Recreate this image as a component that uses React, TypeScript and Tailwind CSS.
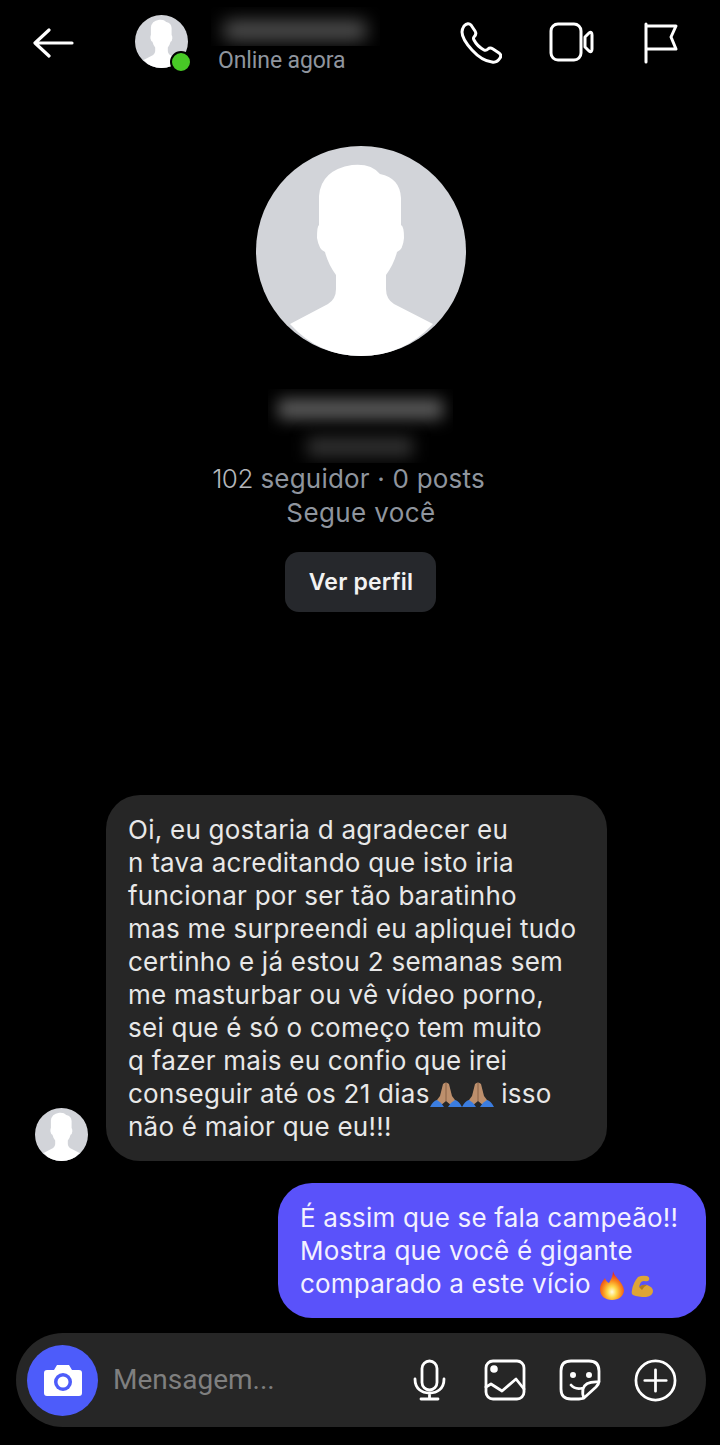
function Person({ className }: { className: string }) {
  // default avatar silhouette
  return (
    <svg viewBox="0 0 210 210" className={className}>
      <circle cx="105" cy="105" r="105" fill="#d2d4d9" />
      <path
        d="M34 178 L72 158 Q80 153 80 143 L80 129 Q72 118 69 106 Q63 104 61 92 Q61 80 63 79 L63 50 Q65 24 96 19 Q115 17 124 28 Q144 32 145 52 L145 79 Q148 80 148 92 Q147 104 141 106 Q138 118 130 129 L130 143 Q130 153 138 158 L177 178 Q147 210 105 210 Q63 210 34 178 Z"
        fill="#fff"
      />
    </svg>
  );
}

function Fire() {
  return (
    <svg viewBox="0 0 24 29" className="inline-block w-[24px] h-[29px] ml-[2px] align-[-7px]">
      <defs>
        <radialGradient id="flame" cx="50%" cy="72%" r="62%">
          <stop offset="0%" stopColor="#fffbe0" />
          <stop offset="30%" stopColor="#ffd94a" />
          <stop offset="62%" stopColor="#f98a1c" />
          <stop offset="100%" stopColor="#e5301f" />
        </radialGradient>
      </defs>
      <path d="M13 0 C14 6 23 11 24 19 C24 25 19 29 12 29 C5 29 0 25 0 18 C0 13 3 10 5 7 C6 10 7 11 9 12 C11 8 13 5 13 0 Z" fill="url(#flame)" />
    </svg>
  );
}

function Muscle() {
  return (
    <svg viewBox="0 0 22 22" className="inline-block w-[22px] h-[22px] ml-[7px] align-[-4px]">
      <path d="M7 2 Q11 0 16 1 Q19 2 18 5 Q17 7 13 6 Q10 6 9 9 L8 12 Q12 9 16 10 Q22 12 22 16 Q22 21 15 22 Q7 22 2 20 Q0 19 1 15 Q2 8 7 2 Z" fill="#dfa535" />
      <path d="M8 12 Q12 9 16 10 Q12 12 11 15 Z" fill="#b37a1e" />
    </svg>
  );
}

function Pray() {
  return (
    <svg viewBox="0 0 32 26" className="inline-block w-[32px] h-[26px] align-[-5px]">
      <path d="M13 2 Q16 -1 19 2 L22 14 L28 22 L22 24 L16 19 L10 24 L4 22 L10 14 Z" fill="#bd8f6c" />
      <path d="M16 1 V19" stroke="#8a6246" strokeWidth="1" />
      <path d="M0 25 Q3 19 7 18 Q11 20 14 25 Z" fill="#3b7de0" />
      <path d="M32 25 Q29 19 25 18 Q21 20 18 25 Z" fill="#3b7de0" />
    </svg>
  );
}

export default function App() {
  return (
    <main className="w-[720px] h-[1445px] bg-black flex flex-col overflow-hidden font-['Inter',sans-serif]">
      {/* header */}
      <header className="h-[85px] flex pl-[33px] pr-[42px] shrink-0">
        <svg viewBox="0 0 41 30" fill="none" stroke="#fff" strokeWidth="3.2" strokeLinecap="round" strokeLinejoin="round" className="w-[41px] h-[30px] mt-[28px] shrink-0">
          <path d="M39 15 H3 M16 2 L2 15 L16 28" />
        </svg>
        <div className="relative w-[53px] h-[53px] ml-[61px] mt-[15px] shrink-0">
          <Person className="w-[53px] h-[53px]" />
          <span className="absolute left-[35px] top-[36px] w-[22px] h-[22px] rounded-full bg-[#48c926] border-2 border-black" />
        </div>
        <div className="ml-[23px] w-[180px] shrink-0">
          <div className="h-[39px] mt-[7px] w-[169px] overflow-hidden">
            <div className="w-[142px] h-[19px] ml-[13px] mt-[14px] bg-[#555555] blur-[9px]" />
          </div>
          <p className="ml-[7px] mt-[1px] text-[23px] leading-[28px] tracking-[-0.1px] text-[#8f959e] font-['Roboto',sans-serif]">Online agora</p>
        </div>
        <div className="ml-auto flex mt-[22px]">
          <svg viewBox="0 0 42 42" fill="none" stroke="#fff" strokeWidth="3" strokeLinecap="round" strokeLinejoin="round" className="w-[42px] h-[42px]">
            <path d="M4 4 Q8 0 11 3 L15 9 Q17 12 14 15 Q13 16 14 18 Q17 24 24 28 Q26 29 28 27 Q30 25 33 27 L39 31 Q42 33 40 36 Q37 41 32 40 Q22 39 12 28 Q2 17 2 10 Q2 7 4 4 Z" />
          </svg>
          <svg viewBox="0 0 45 40" fill="none" stroke="#fff" strokeWidth="3" strokeLinecap="round" strokeLinejoin="round" className="w-[45px] h-[40px] ml-[47px]">
            <rect x="2" y="2" width="30" height="36" rx="7" />
            <path d="M36 15 L40 11 Q43 9 43 13 V27 Q43 31 40 29 L36 25 Z" />
          </svg>
          <svg viewBox="0 0 34 42" fill="none" stroke="#fff" strokeWidth="3" strokeLinecap="round" strokeLinejoin="round" className="w-[34px] h-[42px] ml-[50px]">
            <path d="M2 40 V2 M2 4 H32 L27 15 L32 27 H2" />
          </svg>
        </div>
      </header>

      {/* profile */}
      <section className="flex flex-col items-center mt-[61px] shrink-0">
        <Person className="w-[210px] h-[210px] ml-[2px]" />
        <div className="w-[185px] h-[74px] mt-[33px] flex flex-col items-center overflow-hidden">
          <div className="w-[165px] h-[20px] mt-[10px] bg-[#5c5c5c] blur-[8px] shrink-0" />
          <div className="w-[106px] h-[20px] mt-[18px] bg-[#303030] blur-[8px] shrink-0" />
        </div>
        <p className="mt-[-1px] pr-[23px] text-[26px] leading-[34px] tracking-[0.2px] text-[#8f959e]">
          <span className="text-[#b4b6ba] font-light tracking-[-0.5px]">102</span> seguidor · 0 posts
        </p>
        <p className="pl-[2px] text-[26px] leading-[34px] tracking-[0.4px] text-[#8f959e]">Segue você</p>
        <button className="mt-[22px] pl-[2px] w-[151px] h-[60px] rounded-[14px] bg-[#26282c] text-[#f2f2f2] text-[23px] tracking-[0.2px] font-semibold">Ver perfil</button>
      </section>

      {/* messages */}
      <section className="flex flex-col mt-auto shrink-0">
        <div className="flex items-end pl-[35px]">
          <Person className="w-[53px] h-[53px] shrink-0" />
          <div className="ml-[18px] w-[501px] h-[366px] rounded-[34px] bg-[#262626] pl-[22px] pt-[18px] text-[26px] leading-[33px] tracking-[0.25px] text-[#e8e8e8] whitespace-nowrap">
            Oi, eu gostaria d agradecer eu<br />
            n tava acreditando que isto iria<br />
            funcionar por ser tão baratinho<br />
            mas me surpreendi eu apliquei tudo<br />
            certinho e já estou 2 semanas sem<br />
            me masturbar ou vê vídeo porno,<br />
            sei que é só o começo tem muito<br />
            q fazer mais eu confio que irei<br />
            conseguir até os 21 dias<Pray /><Pray /> isso<br />
            não é maior que eu!!!
          </div>
        </div>
        <div className="flex justify-end pr-[14px] mt-[22px]">
          <div className="w-[428px] h-[135px] rounded-[34px] bg-[#5a52fa] pl-[22px] pt-[18px] text-[26px] leading-[33px] tracking-[0.2px] text-[#f3f1ff] whitespace-nowrap">
            É assim que se fala campeão!!<br />
            Mostra que você é gigante<br />
            comparado a este vício <Fire /><Muscle />
          </div>
        </div>
      </section>

      {/* input bar */}
      <footer className="mt-[15px] mb-[18px] ml-[16px] w-[690px] h-[94px] rounded-full bg-[#262626] flex items-center pl-[11px] pr-[29px] shrink-0">
        <div className="w-[71px] h-[71px] rounded-full bg-[#4d5cfa] flex items-center justify-center shrink-0">
          <svg viewBox="0 0 38 32" className="w-[38px] h-[32px]">
            <path d="M3 6 H10 L13 1 H25 L28 6 H35 Q38 6 38 9 V29 Q38 32 35 32 H3 Q0 32 0 29 V9 Q0 6 3 6 Z" fill="#fff" />
            <circle cx="19" cy="18" r="9" fill="#4d5cfa" />
            <circle cx="19" cy="18" r="5.5" fill="#fff" />
          </svg>
        </div>
        <span className="ml-[15px] text-[28px] text-[#7f7f7f] font-['Roboto',sans-serif]">Mensagem...</span>
        <div className="ml-auto flex items-center">
          <svg viewBox="0 0 33 42" fill="none" stroke="#fff" strokeWidth="2.8" strokeLinecap="round" strokeLinejoin="round" className="w-[33px] h-[42px]">
            <rect x="9" y="2" width="15" height="29" rx="7.5" />
            <path d="M2 20 C2 30 9 34 16.5 34 C24 34 31 30 31 20 M16.5 34 V40 M8 40 H25" />
          </svg>
          <svg viewBox="0 0 42 42" fill="none" stroke="#fff" strokeWidth="2.8" strokeLinecap="round" strokeLinejoin="round" className="w-[42px] h-[42px] ml-[38px]">
            <rect x="2" y="2" width="38" height="38" rx="7" />
            <circle cx="10" cy="10" r="2.4" fill="#fff" />
            <path d="M2 28 L7 25 L18 32 L32 20 L40 30" />
          </svg>
          <svg viewBox="0 0 42 42" fill="none" stroke="#fff" strokeWidth="2.8" strokeLinecap="round" strokeLinejoin="round" className="w-[42px] h-[42px] ml-[33px]">
            <path d="M12 2 H30 Q40 2 40 12 V22 Q40 25 37 28 L26 38 Q24 40 20 40 H12 Q2 40 2 30 V12 Q2 2 12 2 Z" />
            <path d="M40 23 Q26 22 24 30 Q23 35 25 39 M12 26 Q16 31 24 29" />
            <circle cx="14" cy="16" r="1.6" fill="#fff" />
            <circle cx="30" cy="16" r="1.6" fill="#fff" />
          </svg>
          <svg viewBox="0 0 44 44" fill="none" stroke="#fff" strokeWidth="2.8" strokeLinecap="round" className="w-[43px] h-[43px] ml-[33px]">
            <circle cx="22" cy="22" r="20" />
            <path d="M22 11 V33 M11 22 H33" />
          </svg>
        </div>
      </footer>
    </main>
  );
}
